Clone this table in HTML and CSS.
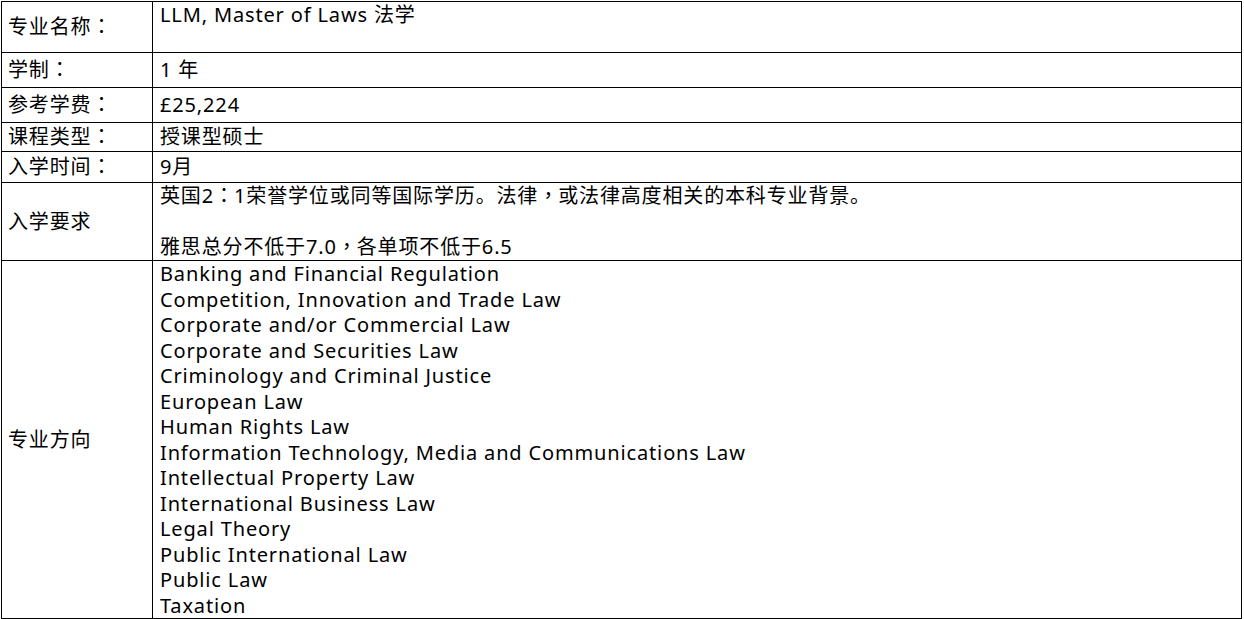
FILE: index.html
```html
<!DOCTYPE html>
<html lang="zh-CN">
<head>
    <meta charset="UTF-8">
    <title>LLM, Master of Laws 法学</title>
    <link rel="stylesheet" href="styles.css">
</head>
<body>
    <table class="course">
        <tr class="row-name">
            <td class="label">专业名称<span class="punct" lang="zh-TW">：</span></td>
            <td class="value top">LLM, Master of Laws 法学</td>
        </tr>
        <tr class="row-length">
            <td class="label">学制<span class="punct" lang="zh-TW">：</span></td>
            <td class="value">1 年</td>
        </tr>
        <tr class="row-fee">
            <td class="label">参考学费<span class="punct" lang="zh-TW">：</span></td>
            <td class="value">£25,224</td>
        </tr>
        <tr class="row-type">
            <td class="label">课程类型<span class="punct" lang="zh-TW">：</span></td>
            <td class="value">授课型硕士</td>
        </tr>
        <tr class="row-start">
            <td class="label">入学时间<span class="punct" lang="zh-TW">：</span></td>
            <td class="value">9月</td>
        </tr>
        <tr class="row-req">
            <td class="label">入学要求</td>
            <td class="value">
                英国2<span class="punct" lang="zh-TW">：</span>1荣誉学位或同等国际学历。法律<span class="punct" lang="zh-TW">，</span>或法律高度相关的本科专业背景。<br><br>雅思总分不低于7.0<span class="punct" lang="zh-TW">，</span>各单项不低于6.5
            </td>
        </tr>
        <tr class="row-options">
            <td class="label">专业方向</td>
            <td class="value">
                <ul class="options">
                    <li>Banking and Financial Regulation</li>
                    <li>Competition, Innovation and Trade Law</li>
                    <li>Corporate and/or Commercial Law</li>
                    <li>Corporate and Securities Law</li>
                    <li>Criminology and Criminal Justice</li>
                    <li>European Law</li>
                    <li>Human Rights Law</li>
                    <li>Information Technology, Media and Communications Law</li>
                    <li>Intellectual Property Law</li>
                    <li>International Business Law</li>
                    <li>Legal Theory</li>
                    <li>Public International Law</li>
                    <li>Public Law</li>
                    <li>Taxation</li>
                </ul>
            </td>
        </tr>
    </table>
</body>
</html>
```

FILE: styles.css
```css
body {
    margin: 0;
    padding: 1px;
    background-color: #fff;
    color: #000;
    font-family: "Noto Sans", "Noto Sans CJK SC", sans-serif;
    font-size: 20px;
    letter-spacing: 0.85px;
}
.course {
    border-collapse: collapse;
    width: 1241px;
    table-layout: fixed;
}
.course td {
    border: 1px solid #000;
    padding: 0 6px;
    line-height: 25.5px;
    vertical-align: middle;
    white-space: nowrap;
}
.course td.label {
    width: 138px;
}
.course td.value {
    padding-left: 7px;
}
.course td.top {
    vertical-align: top;
}
/* centred full-width punctuation, like the original font */
.punct {
    font-family: "Noto Sans CJK TC", sans-serif;
    letter-spacing: 0;
    line-height: 1;
}
.row-name { height: 51px; }
.row-length { height: 35px; }
.row-fee { height: 35px; }
.row-type { height: 29px; }
.row-start { height: 31px; }
.row-req { height: 78px; }
.options {
    list-style-type: none;
    margin: 0;
    padding: 0;
}
```
